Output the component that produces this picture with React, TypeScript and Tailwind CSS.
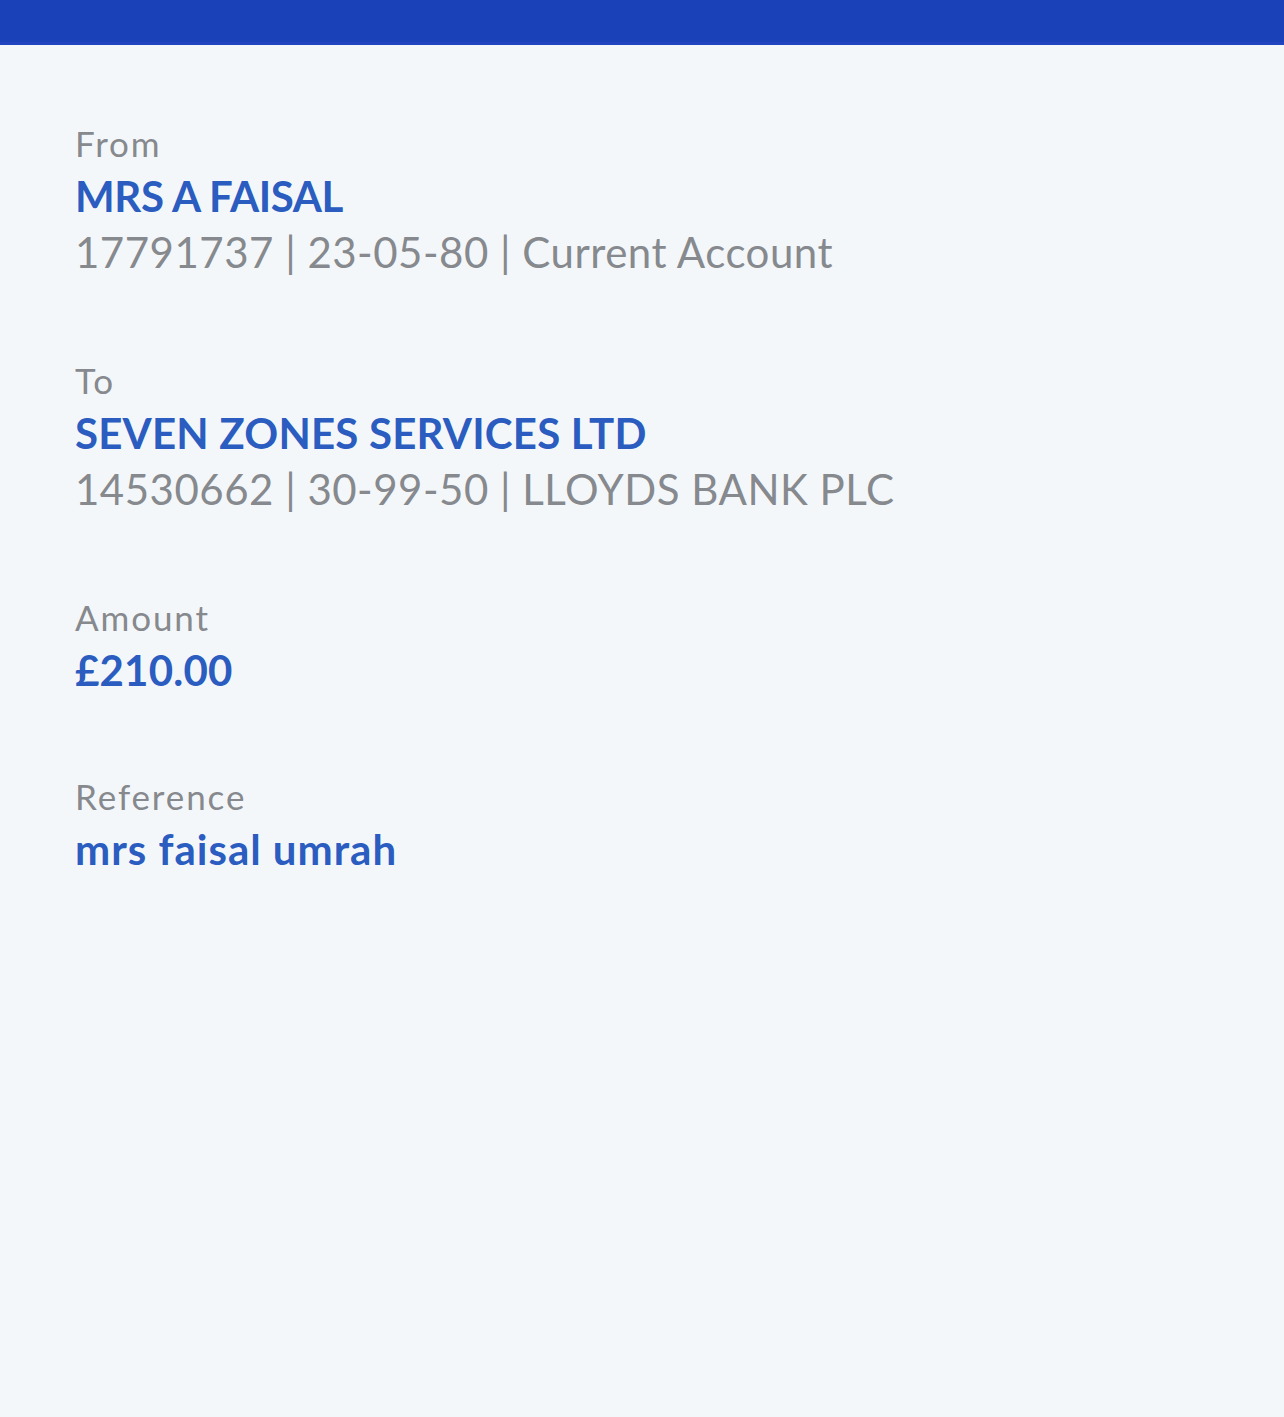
const font = { fontFamily: 'Lato, "Open Sans", sans-serif' }

type Item = { label: string; value: string; valueClass?: string; detail?: string }

const items: Item[] = [
  { label: 'From', value: 'MRS A FAISAL', valueClass: 'tracking-[-0.4px]', detail: '17791737 | 23-05-80 | Current Account' },
  { label: 'To', value: 'SEVEN ZONES SERVICES LTD', detail: '14530662 | 30-99-50 | LLOYDS BANK PLC' },
  { label: 'Amount', value: '£210.00' },
  { label: 'Reference', value: 'mrs faisal umrah', valueClass: 'tracking-[1px]' },
]

export default function App() {
  return (
    <div className="min-h-[1417px] w-full bg-[#f4f7fa]" style={font}>
      <div className="h-[45px] w-full bg-[#1b41b9] border-b-[3px] border-[#2144c0]" />
      <div className="flex flex-col gap-[73px] px-[75px] pt-[72px]">
        {items.map((item) => (
          <div key={item.label} className="flex flex-col">
            <div className="text-[35px] leading-[52px] tracking-[1.9px] text-[#86898d]">{item.label}</div>
            <div
              className={`text-[42px] leading-[54px] font-bold text-[#2b5cc0] ${item.valueClass ?? 'tracking-[0.2px]'}`}
            >
              {item.value}
            </div>
            {item.detail && (
              <div className="text-[42px] leading-[58px] tracking-[0.5px] text-[#86898d]">{item.detail}</div>
            )}
          </div>
        ))}
      </div>
    </div>
  )
}
